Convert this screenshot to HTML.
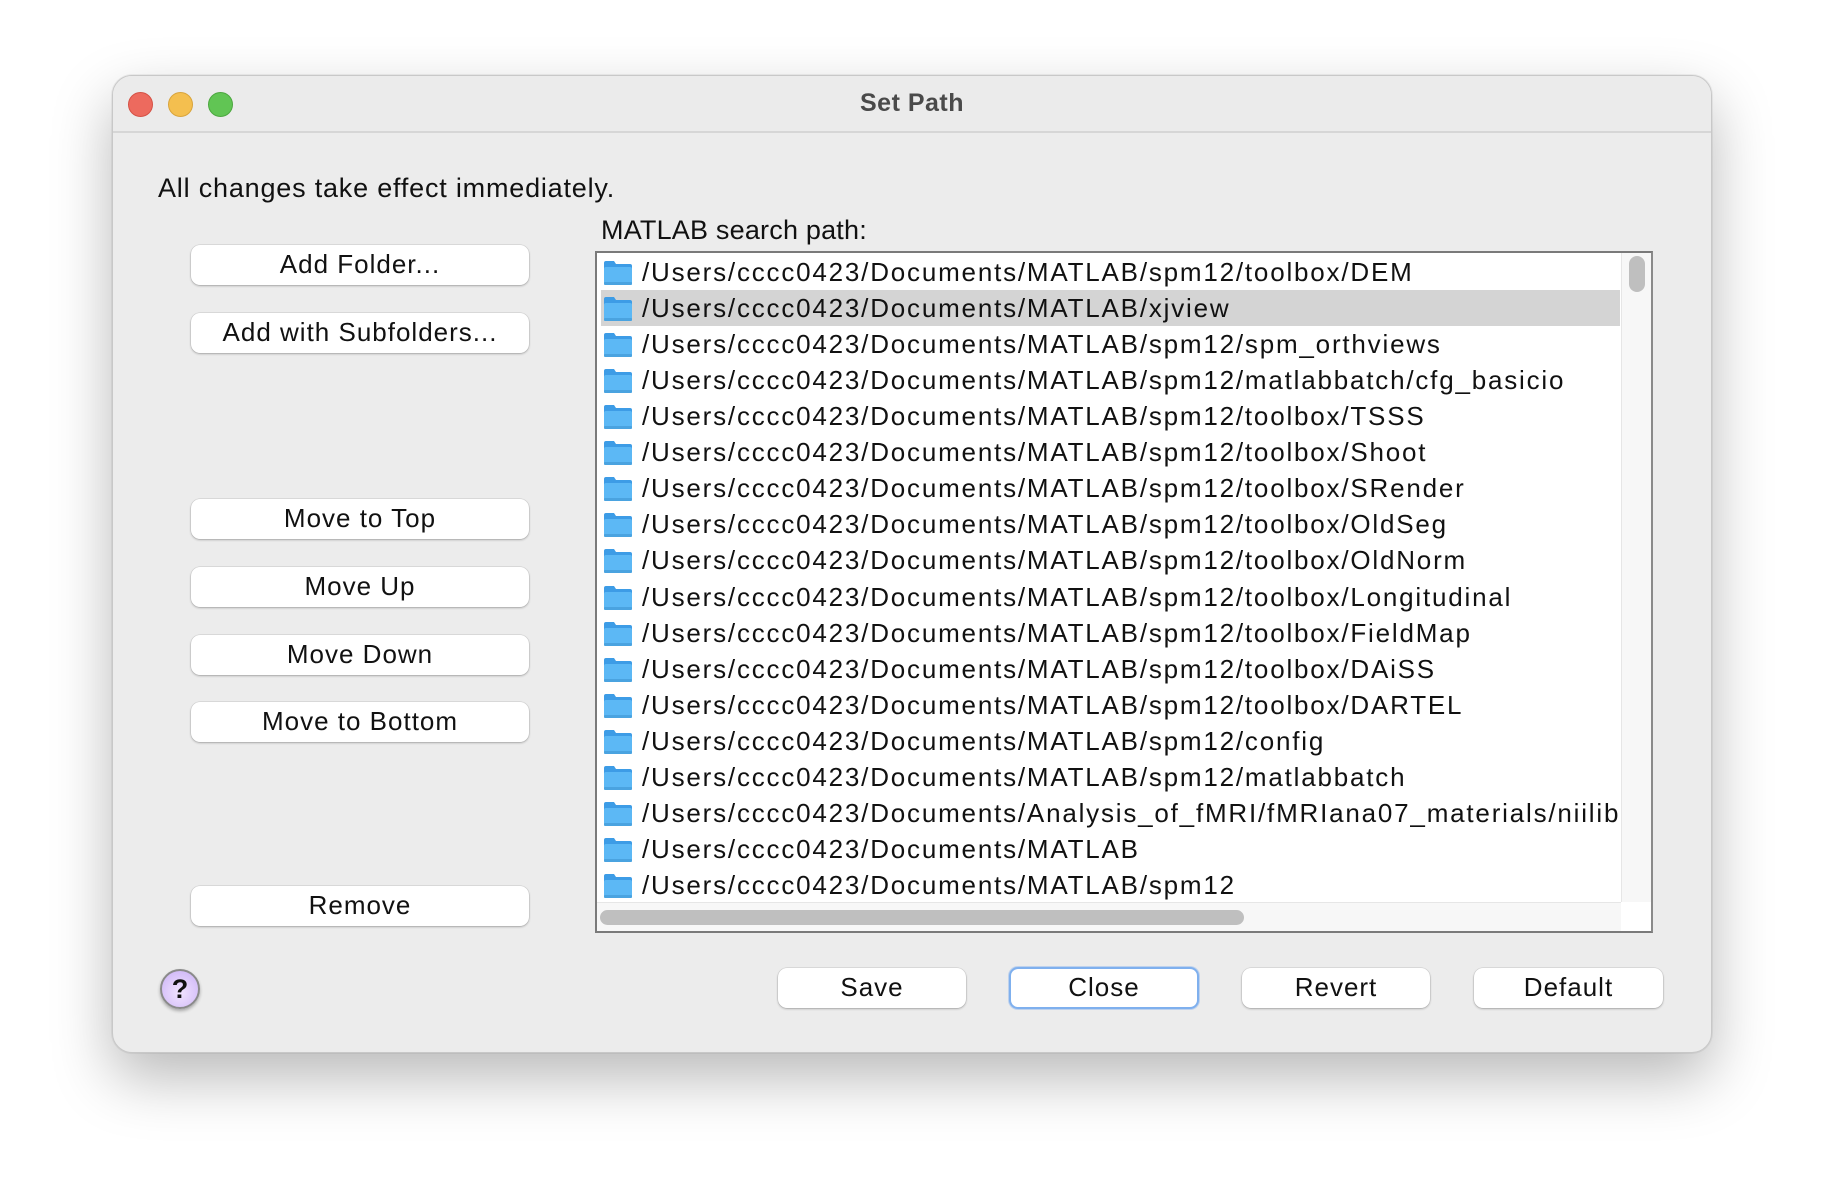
<!DOCTYPE html>
<html><head><meta charset="utf-8"><style>
*{box-sizing:border-box;margin:0;padding:0}
body{width:1824px;height:1200px;background:#fff;font-family:"Liberation Sans","DejaVu Sans",sans-serif;position:relative;overflow:hidden;color:#111}
.win{position:absolute;left:112px;top:75px;width:1600px;height:978px;background:#ececec;border-radius:20px;border:1px solid #c8c8c8;box-shadow:0 25px 60px rgba(0,0,0,.28),0 0 0 1px rgba(0,0,0,.05);overflow:hidden}
.tb{position:absolute;left:0;top:0;width:100%;height:57px;background:#ebebeb;border-bottom:2px solid #d6d6d6}
.dot{position:absolute;top:16px;width:25px;height:25px;border-radius:50%}
.title{position:absolute;left:0;right:0;top:13px;text-align:center;font-weight:bold;font-size:25px;color:#4a4a4a;letter-spacing:.5px}
.a{position:absolute;font-size:27px;letter-spacing:.8px;white-space:nowrap}
.btn{position:absolute;background:#fff;border-radius:9px;box-shadow:0 1px 2px rgba(0,0,0,.25),0 0 0 .5px rgba(0,0,0,.12);text-align:center;font-size:26px;letter-spacing:1px;line-height:38px;height:40px}
.list{position:absolute;left:482px;top:175px;width:1058px;height:682px;background:#fff;border:2px solid #7a7a7a;border-right-color:#8a8a8a;overflow:hidden}
.row{position:absolute;left:4px;height:36px;width:1019px;font-size:26px;letter-spacing:1.8px;line-height:36px;white-space:nowrap}
.row svg{position:absolute;left:2px;top:6px}
.row span{position:absolute;left:41px;top:0}
.sel{background:#d4d4d4}
</style></head><body>
<div class="win">
 <div class="tb">
  <div class="dot" style="left:15px;background:#ed6a5e;border:1px solid #d55145"></div>
  <div class="dot" style="left:55px;background:#f4bf4f;border:1px solid #d9a43b"></div>
  <div class="dot" style="left:95px;background:#61c554;border:1px solid #4ca73f"></div>
  <div class="title">Set Path</div>
 </div>
 <div class="a" style="left:45px;top:97px">All changes take effect immediately.</div>
 <div class="a" style="left:488px;top:139px;letter-spacing:.2px">MATLAB search path:</div>
 <div class="btn" style="left:78px;top:169px;width:338px">Add Folder...</div>
 <div class="btn" style="left:78px;top:237px;width:338px">Add with Subfolders...</div>
 <div class="btn" style="left:78px;top:423px;width:338px">Move to Top</div>
 <div class="btn" style="left:78px;top:491px;width:338px">Move Up</div>
 <div class="btn" style="left:78px;top:559px;width:338px">Move Down</div>
 <div class="btn" style="left:78px;top:626px;width:338px">Move to Bottom</div>
 <div class="btn" style="left:78px;top:810px;width:338px">Remove</div>
 <div class="list">
  <div id="rows"></div>
  <div style="position:absolute;left:1024px;top:0;width:30px;height:649px;background:#f7f7f7;border-left:1px solid #e6e6e6"></div>
  <div style="position:absolute;left:1032px;top:3px;width:16px;height:36px;background:#bfbfbf;border-radius:8px"></div>
  <div style="position:absolute;left:0;top:649px;width:1024px;height:30px;background:#f7f7f7;border-top:1px solid #e6e6e6"></div>
  <div style="position:absolute;left:3px;top:657px;width:644px;height:15px;background:#bfbfbf;border-radius:8px"></div>
 </div>
 <div style="position:absolute;left:47px;top:893px;width:40px;height:40px;border-radius:50%;background:radial-gradient(circle at 50% 60%,#f2e4ff,#c9b0f5);border:2px solid #8a8a8a;box-shadow:0 2px 3px rgba(0,0,0,.3);text-align:center;font-weight:bold;font-size:27px;line-height:36px">?</div>
 <div class="btn" style="left:665px;top:892px;width:188px">Save</div>
 <div class="btn" style="left:896px;top:891px;width:190px;height:42px;border:2px solid #7fb0ee;line-height:36px;box-shadow:0 0 0 1px rgba(120,170,240,.4)">Close</div>
 <div class="btn" style="left:1129px;top:892px;width:188px">Revert</div>
 <div class="btn" style="left:1361px;top:892px;width:189px">Default</div>
</div>
<script>
var p=["/Users/cccc0423/Documents/MATLAB/spm12/toolbox/DEM","/Users/cccc0423/Documents/MATLAB/xjview","/Users/cccc0423/Documents/MATLAB/spm12/spm_orthviews","/Users/cccc0423/Documents/MATLAB/spm12/matlabbatch/cfg_basicio","/Users/cccc0423/Documents/MATLAB/spm12/toolbox/TSSS","/Users/cccc0423/Documents/MATLAB/spm12/toolbox/Shoot","/Users/cccc0423/Documents/MATLAB/spm12/toolbox/SRender","/Users/cccc0423/Documents/MATLAB/spm12/toolbox/OldSeg","/Users/cccc0423/Documents/MATLAB/spm12/toolbox/OldNorm","/Users/cccc0423/Documents/MATLAB/spm12/toolbox/Longitudinal","/Users/cccc0423/Documents/MATLAB/spm12/toolbox/FieldMap","/Users/cccc0423/Documents/MATLAB/spm12/toolbox/DAiSS","/Users/cccc0423/Documents/MATLAB/spm12/toolbox/DARTEL","/Users/cccc0423/Documents/MATLAB/spm12/config","/Users/cccc0423/Documents/MATLAB/spm12/matlabbatch","/Users/cccc0423/Documents/Analysis_of_fMRI/fMRIana07_materials/niilib","/Users/cccc0423/Documents/MATLAB","/Users/cccc0423/Documents/MATLAB/spm12"];
var ic='<svg width="30" height="26" viewBox="0 0 30 26"><path d="M1 3 Q1 1 3 1 H11 L13 4 H27 Q29 4 29 6 V9 H1Z" fill="#3d9ce6"/><rect x="1" y="7" width="28" height="18" rx="2" fill="#5cb8f5"/><rect x="1" y="22" width="28" height="3" rx="1" fill="#4aa3e0"/></svg>';
var h='';p.forEach(function(s,i){h+='<div class="row'+(i==1?' sel':'')+'" style="top:'+(1+i*31*1.163).toFixed(1)+'px">'+ic+'<span>'+s+'</span></div>'});
document.getElementById('rows').innerHTML=h;
</script>
</body></html>
